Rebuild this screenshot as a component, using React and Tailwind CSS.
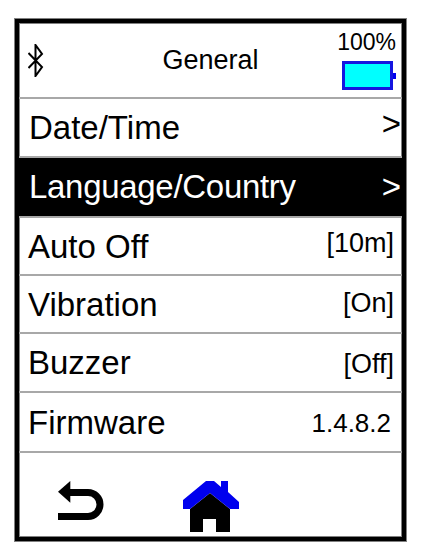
const font = { fontFamily: '"Liberation Sans", Arial, sans-serif' };

function Bluetooth() {
  return (
    <svg width="16" height="33" viewBox="0 0 16 33" fill="none" stroke="#000" strokeWidth="2">
      <path d="M0.5 9 L14 23 L7.5 32 V1 L14 10 L0.5 24" />
    </svg>
  );
}

function Battery() {
  return (
    <div className="flex items-center">
      <div className="w-[51px] h-[29px] border-[3px] border-[#1515e0] bg-[#00ffff]" />
      <div className="w-[3px] h-[6px] bg-[#0000ee]" />
    </div>
  );
}

function BackIcon() {
  return (
    <svg width="46" height="39" viewBox="0 0 46 39">
      <path d="M12 11.5 H30 A12 12 0 0 1 30 35.5 H0" fill="none" stroke="#000" strokeWidth="7" />
      <path d="M0 10.7 L12.3 0 V21.7 Z" fill="#000" />
    </svg>
  );
}

function HomeIcon() {
  return (
    <svg width="56" height="51" viewBox="0 0 56 51">
      <path d="M7 28 L27 12 L47 28 V51 H33 V38 H20 V51 H7 Z" fill="#000" />
      <path d="M0 28 V19 L23 0 H31 L38 6 V0 H45 V11 L56 21 V28 H47 L27 12 L7 28 Z" fill="#0000ee" />
    </svg>
  );
}

function Row({ label, value, active, height, labelClass, valueClass }) {
  return (
    <div className={`${height} shrink-0 flex items-center justify-between pl-[10px] border-b-[2px] border-[#a8a8a8] ${active ? "bg-black text-white" : "text-black"}`}>
      <span className={`text-[33px] leading-none ${labelClass ?? ""}`}>{label}</span>
      <span className={`leading-none ${valueClass}`}>{value}</span>
    </div>
  );
}

export default function App() {
  return (
    <div className="w-[421px] h-[556px] bg-white pt-[19px] pl-[15px]" style={font}>
      <div className="w-[391px] h-[522px] border-[4px] border-black flex flex-col shadow-[0_0_0_1px_#808080,inset_0_0_0_1px_#808080]">
        <div className="h-[76px] shrink-0 flex items-center justify-between border-b-[2px] border-[#a8a8a8] pl-[9px] pr-[6px] text-black">
          <Bluetooth />
          <span className="text-[27px] leading-none ml-[40px]">General</span>
          <div className="flex flex-col items-end gap-[7px] mt-[1px]">
            <span className="text-[23px] leading-none">100%</span>
            <Battery />
          </div>
        </div>
        <Row height="h-[59px]" label="Date/Time" value=">" valueClass="text-[33px] pr-[1px] -mt-[8px]" />
        <Row height="h-[60px]" label="Language/Country" value=">" active labelClass="tracking-[-0.3px] -mt-[2px]" valueClass="text-[33px] pr-[1px] -mt-[1px]" />
        <Row height="h-[58px]" label="Auto Off" labelClass="-ml-[1px]" value="[10m]" valueClass="text-[27px] pr-[8px] -mt-[6px]" />
        <Row height="h-[58px]" label="Vibration" labelClass="-ml-[1px]" value="[On]" valueClass="text-[27px] pr-[8px] -mt-[2px]" />
        <Row height="h-[59px]" label="Buzzer" labelClass="-ml-[1px]" value="[Off]" valueClass="text-[27px] pr-[8px] mt-[3px]" />
        <Row height="h-[60px]" label="Firmware" labelClass="-ml-[1px]" value="1.4.8.2" valueClass="text-[26px] pr-[11px] mt-[2px]" />
        <div className="flex-1 flex items-start pl-[39px] gap-[79px] pt-[28px]">
          <BackIcon />
          <HomeIcon />
        </div>
      </div>
    </div>
  );
}
